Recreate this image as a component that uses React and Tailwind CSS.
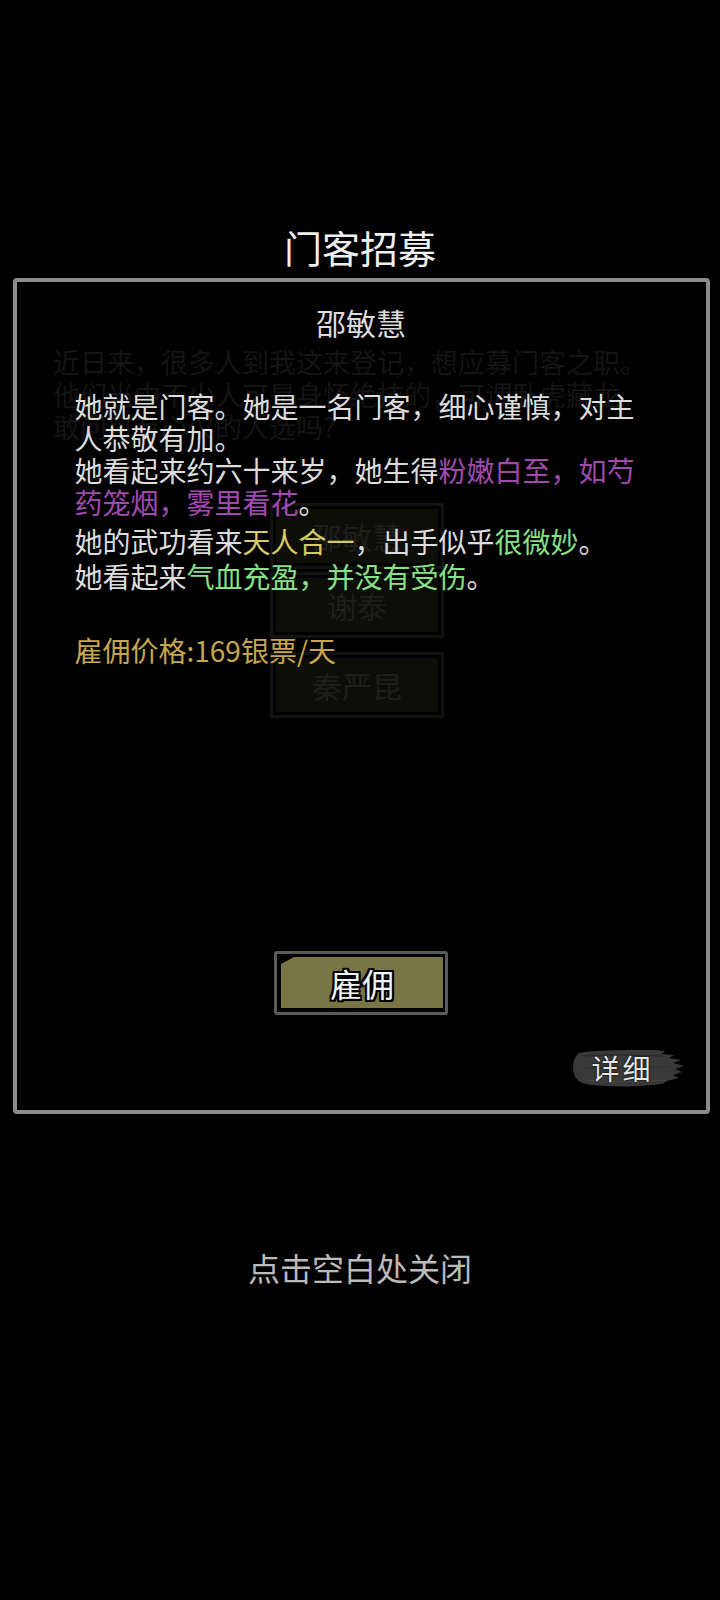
import React from "react";

const FONT = { fontFamily: '"Noto Sans CJK SC", "Noto Sans", sans-serif' };

function BrushTag({ label }) {
  return (
    <div className="relative w-[116px] h-[44px] flex items-center">
      <svg className="absolute inset-0" width="116" height="44" viewBox="0 0 116 44">
        <path
          d="M9,7 C24,4 56,4 84,4 L95,5 L92,8 L104,9 L99,12 L111,14 L103,17 L114,20 L105,23 L112,26 L103,29 L109,32 L97,35 L92,38 C70,41 42,41 22,39 C12,38 6,35 4,28 C2,20 3,12 9,7 Z"
          fill="#393939"
        />
        <path d="M12,10 C40,8 70,9 94,10" stroke="#2b2b2b" strokeWidth="1.5" fill="none" />
        <path d="M10,22 C40,21 70,22 100,21" stroke="#323232" strokeWidth="1" fill="none" />
        <path d="M14,34 C40,36 70,36 96,34" stroke="#454545" strokeWidth="1" fill="none" />
      </svg>
      <span
        className="relative pl-[22px] text-[28px] leading-none tracking-[3px] text-[#e6e6e6] [text-shadow:0_0_2px_#000,0_0_1px_#000]"
        style={{ fontFamily: '"Noto Sans CJK SC", serif' }}
      >
        {label}
      </span>
    </div>
  );
}

function HireButton() {
  return (
    <div className="mx-auto w-[174px] h-[64px] rounded-[3px] border-[3px] border-[#5b5b5b] bg-black pt-[3px] pb-[4px] pl-[4px] pr-[2px]">
      <div className="w-full h-full bg-[#7a7545] [clip-path:polygon(13px_0,100%_0,100%_100%,0_100%,0_7px)] flex items-center justify-center">
        <span className="text-[32px] leading-none font-normal text-[#f4f4f4] [text-shadow:-2px_0_#000,2px_0_#000,0_-2px_#000,0_2px_#000,-2px_-2px_#000,2px_2px_#000,-2px_2px_#000,2px_-2px_#000]">
          雇佣
        </span>
      </div>
    </div>
  );
}

function DimSlot({ name }) {
  return (
    <div className="w-[174px] h-[66px] border-[3px] border-[#121212] bg-black p-[3px]">
      <div className="w-full h-full bg-[#0e0e09] flex items-center justify-center text-[30px] leading-none text-[#1e1e1e]">
        {name}
      </div>
    </div>
  );
}

export default function App() {
  return (
    <div className="relative w-[720px] h-[1600px] bg-black overflow-hidden" style={FONT}>
      {/* page underneath the dialog, darkened */}
      <div className="pt-[346px] pl-[53px]">
        <div className="text-[27px] leading-[32.5px] text-[#141414]">
          <p>近日来，很多人到我这来登记，想应募门客之职。</p>
          <p>他们当中不少人可是身怀绝技的，可谓卧虎藏龙。</p>
          <p>敢问可有心仪的人选吗?</p>
        </div>
        <div className="mt-[59px] ml-[217px] flex flex-col gap-[3px]">
          <DimSlot name="邵敏慧" />
          <DimSlot name="谢泰" />
          <div className="h-[8px]" />
          <DimSlot name="秦严昆" />
        </div>
      </div>

      {/* dialog */}
      <div className="absolute inset-0 flex flex-col items-center">
        <h1 className="mt-[228px] text-[38px] leading-[38px] text-[#efefef]">门客招募</h1>

        <div className="mt-[12px] ml-[2px] w-[697px] h-[836px] rounded-[4px] border-[4px] border-[#8b8b8b] flex flex-col">
          <div className="mt-[25px] text-center text-[30px] leading-[30px] text-[#dcdcdc]">邵敏慧</div>

          <div className="mt-[53px] px-[58px] text-[28px] leading-[32px] text-[#dddddd]">
            <p>她就是门客。她是一名门客，细心谨慎，对主人恭敬有加。</p>
            <p>
              她看起来约六十来岁，她生得
              <span className="text-[#a04ab0]">粉嫩白至，如芍药笼烟，雾里看花</span>。
            </p>
            <p className="mt-[7px]">
              她的武功看来<span className="text-[#d4cb68]">天人合一</span>，出手似乎
              <span className="text-[#88e087]">很微妙</span>。
            </p>
            <p className="mt-[3px]">
              她看起来<span className="text-[#88e087]">气血充盈，并没有受伤</span>。
            </p>
            <p className="mt-[42px] text-[#c6a74b]">雇佣价格:169银票/天</p>
          </div>

          <div className="mt-[285px]">
            <HireButton />
          </div>

          <div className="mt-[31px] self-end mr-[20px]">
            <BrushTag label="详细" />
          </div>
        </div>

        <div className="mt-[137px] text-[32px] leading-[32px] text-[#bababa]">点击空白处关闭</div>
      </div>
    </div>
  );
}
